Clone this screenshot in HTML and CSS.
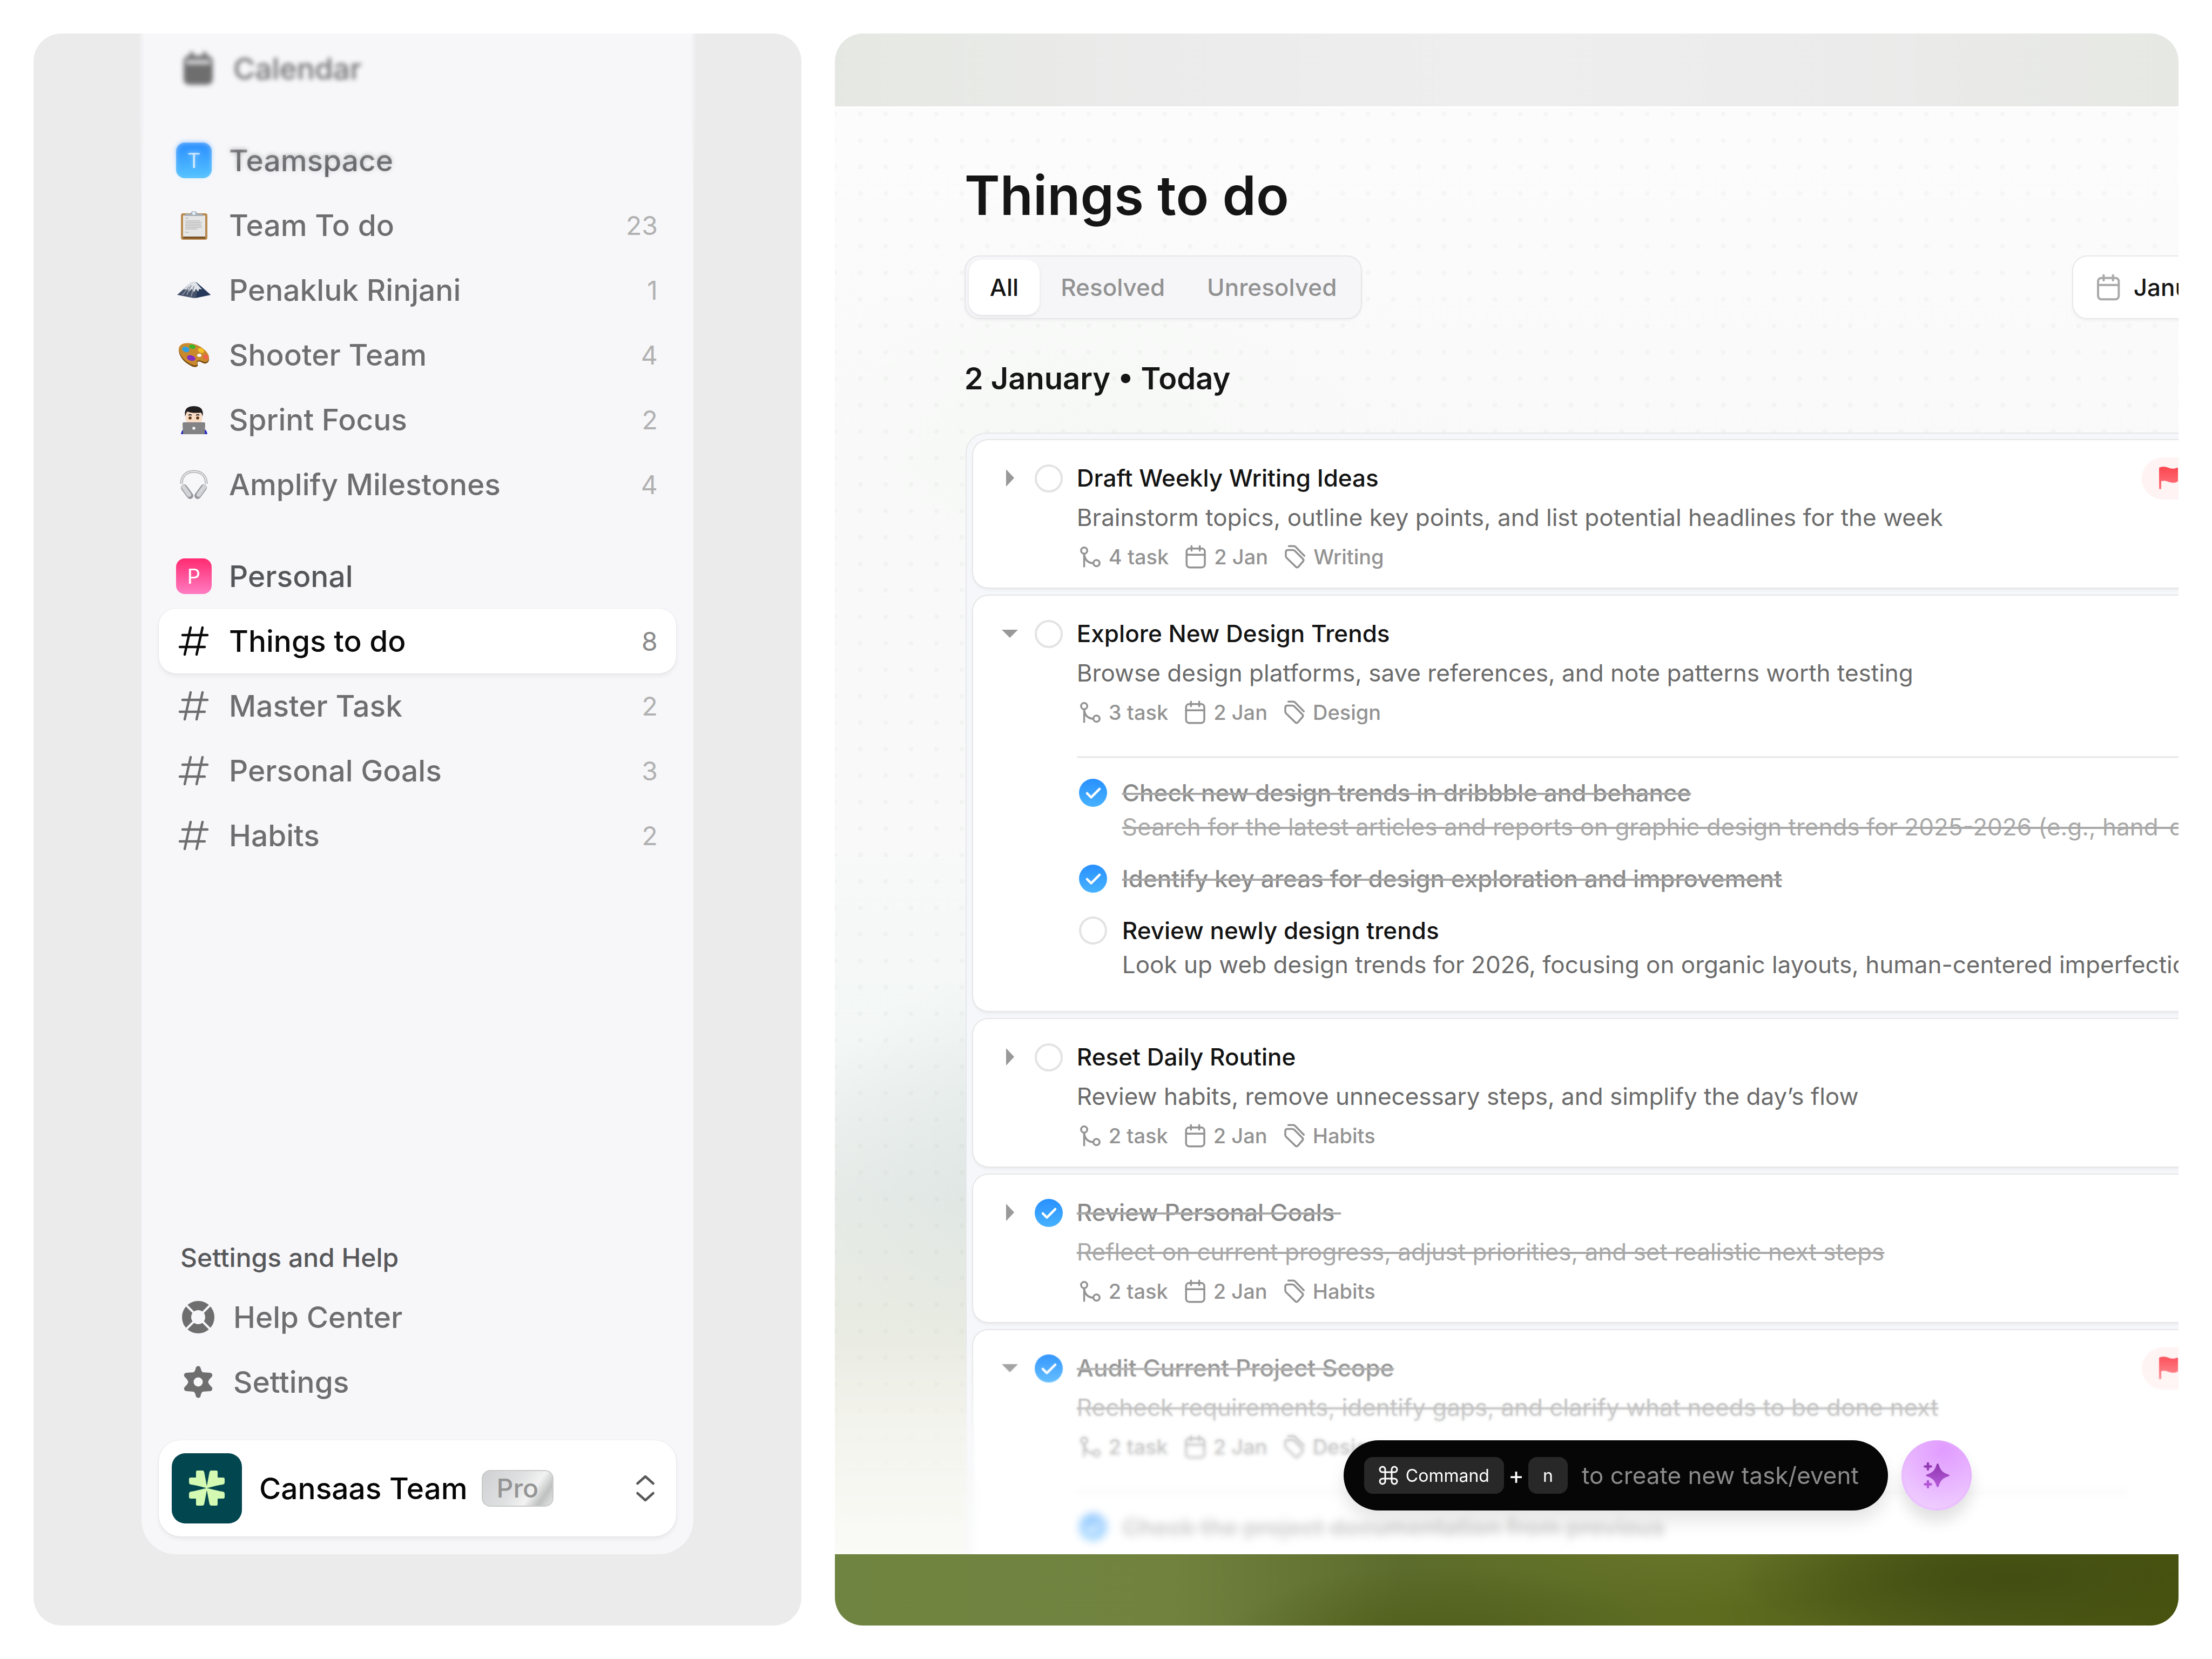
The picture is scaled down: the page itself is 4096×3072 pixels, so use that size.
FILE: index.html
```html
<!DOCTYPE html>
<html lang="en">
<head>
    <meta charset="UTF-8">
    <meta name="viewport" content="width=device-width, initial-scale=1.0">
    <title>Things to do</title>
    <link rel="stylesheet" href="styles.css">
</head>
<body>

<!-- shared icons -->
<svg class="sprite" aria-hidden="true">
    <symbol id="hash" viewBox="0 0 66 66">
        <path d="M27 8 16 58M49 8 38 58M12 22H58M7 44H53" fill="none" stroke="currentColor" stroke-width="4.5" stroke-linecap="round"/>
    </symbol>
    <symbol id="branch" viewBox="27 40 150 150">
        <g fill="none" stroke="currentColor" stroke-width="12" stroke-linecap="round">
            <circle cx="63" cy="76" r="19.5"/>
            <circle cx="141" cy="155" r="19.5"/>
            <path d="M63 98V176M63 98C66 132 84 152 118 156"/>
        </g>
    </symbol>
    <symbol id="calendar" viewBox="694 40 150 150">
        <g fill="none" stroke="currentColor" stroke-width="12" stroke-linecap="round">
            <rect x="712" y="63" width="115" height="119" rx="19"/>
            <path d="M712 102H827M743 48V77M795 48V77"/>
        </g>
    </symbol>
    <symbol id="tag" viewBox="1319 40 150 150">
        <g fill="none" stroke="currentColor" stroke-width="12" stroke-linecap="round" stroke-linejoin="round">
            <path d="M1336 85Q1336 72 1349 72H1379Q1387 72 1392 77L1444 129Q1451 136 1445 144L1416 178Q1408 187 1399 178L1341 122Q1336 117 1336 110Z"/>
            <path d="M1355 48H1387Q1393 48 1398 53L1453 109"/>
        </g>
    </symbol>
    <symbol id="caret-right" viewBox="0 0 40 40">
        <path d="M13 4 28 20 13 36Z" fill="currentColor"/>
    </symbol>
    <symbol id="caret-down" viewBox="0 0 40 40">
        <path d="M5 13H35L20 28Z" fill="currentColor"/>
    </symbol>
    <symbol id="flag" viewBox="0 0 36 44">
        <path d="M0 3Q0 2 1 1.500C9-1 14 1 20 3C25 4.500 29 4 33 2Q35 1.500 35 3.500V26Q35 27.500 34 28C29 31 22 30 17 28C12 26 8 26 4 27V40Q4 42 2 42Q0 42 0 40Z" fill="url(#flagFill)"/>
    </symbol>
    <defs>
        <linearGradient id="flagFill" x1="0" y1="0" x2="0" y2="1">
            <stop offset="0" stop-color="#fb4650"/>
            <stop offset="1" stop-color="#ff7680"/>
        </linearGradient>
        <linearGradient id="sparkFill" gradientUnits="userSpaceOnUse" x1="0" y1="0" x2="0" y2="48">
            <stop offset="0" stop-color="#8c34ac"/>
            <stop offset="1" stop-color="#ba5ddd"/>
        </linearGradient>
    </defs>
</svg>

<div class="page">

    <aside class="panel side-panel">
        <div class="sidebar">
            <nav class="nav" aria-label="Spaces">
                <div class="nav-group">
                    <a href="#" class="nav-row nav-row-tool">
                        <svg class="nav-icon" viewBox="0 0 66 66">
                            <rect x="6" y="9" width="54" height="54" rx="10" fill="#6f6e6f"/>
                            <rect x="11" y="17" width="44" height="8" fill="#f7f7fa" opacity=".8"/>
                            <path d="M21 5V14M45 5V14" stroke="#6f6e6f" stroke-width="7" stroke-linecap="round"/>
                        </svg>
                        <span>Calendar</span>
                    </a>
                </div>

                <div class="nav-group">
                    <a href="#" class="nav-row nav-row-head"><span class="space-badge badge-blue">T</span><span>Teamspace</span></a>
                    <a href="#" class="nav-row">
                        <svg class="nav-icon" viewBox="0 0 66 66">
                            <rect x="9" y="11" width="49" height="49" rx="4" fill="#b98a4e"/>
                            <rect x="13" y="54" width="41" height="4" fill="#7d5528"/>
                            <rect x="13" y="15" width="41" height="39" fill="#e6e6e6"/>
                            <path d="M17 20H23M17 25H44M17 28H48M17 31H46M17 34H48M17 37H47M17 40H39M17 46H24" stroke="#b9b9b9" stroke-width="1.5"/>
                            <path d="M16 16Q16 12 20 12H26Q28 7 33 7Q38 7 40 12H46Q50 12 50 16Z" fill="#a9b0b8"/>
                            <circle cx="33" cy="11" r="3" fill="#e4f0f8"/>
                        </svg>
                        <span>Team To do</span><span class="count">23</span>
                    </a>
                    <a href="#" class="nav-row">
                        <svg class="nav-icon" viewBox="0 0 66 66">
                            <path d="M2 42 28 19Q33 17 38 19L64 42 33 48Z" fill="#47536b"/>
                            <path d="M38 19 64 42 36 48 40 34Z" fill="#26395a"/>
                            <path d="M14 32 28 19Q33 17 37 19L48 32 43 31 41 36 37 31 33 37 29 31 23 37 22 32Z" fill="#dfe3e8"/>
                            <path d="M28 24 20 42M33 26 28 45M24 27 12 42" stroke="#8d94a2" stroke-width="2" fill="none"/>
                        </svg>
                        <span>Penakluk Rinjani</span><span class="count">1</span>
                    </a>
                    <a href="#" class="nav-row">
                        <svg class="nav-icon" viewBox="0 0 66 66">
                            <path d="M5 25C5 14 18 11 29 13C45 16 59 28 61 39C62 48 55 51 49 48C43 44 38 45 40 50C42 57 33 57 27 53C15 47 6 37 5 25Z" fill="#7a4c12"/>
                            <path d="M5 22C6 12 18 10 29 12C45 15 60 27 61 37C61 46 55 48 49 45C43 42 37 43 39 48C41 54 33 53 27 50C15 44 6 34 5 22Z" fill="#c98a2e"/>
                            <ellipse cx="18" cy="23" rx="7" ry="5" transform="rotate(20 18 23)" fill="#2f9fe0"/>
                            <ellipse cx="30" cy="18" rx="6" ry="4" transform="rotate(12 30 18)" fill="#3bb32b"/>
                            <ellipse cx="46" cy="25" rx="6" ry="4" transform="rotate(25 46 25)" fill="#f6c326"/>
                            <ellipse cx="55" cy="37" rx="5" ry="4" transform="rotate(45 55 37)" fill="#f0604c"/>
                            <ellipse cx="28" cy="39" rx="8" ry="5" transform="rotate(15 28 39)" fill="#8230c4"/>
                            <ellipse cx="43" cy="34" rx="4" ry="3" fill="#f7f7fa"/>
                        </svg>
                        <span>Shooter Team</span><span class="count">4</span>
                    </a>
                    <a href="#" class="nav-row">
                        <svg class="nav-icon" viewBox="0 0 66 66">
                            <path d="M9 60Q10 51 18 49H49Q57 51 58 60Z" fill="#2b2fc0"/>
                            <ellipse cx="33" cy="27" rx="16" ry="18" fill="#f8dcc6"/>
                            <path d="M17 27C14 13 22 8 33 8C44 8 52 13 49 27C48 23 47 21 46 20C38 21 28 21 21 18C19 20 18 23 17 27Z" fill="#221f20"/>
                            <path d="M23 25Q26 23 29 25M37 25Q40 23 43 25" stroke="#221f20" stroke-width="2" fill="none"/>
                            <circle cx="26" cy="30" r="2.800" fill="#5a3310"/>
                            <circle cx="40" cy="30" r="2.800" fill="#5a3310"/>
                            <path d="M12 41Q12 38 15 38H51Q54 38 54 41L53 60H13Z" fill="#838386"/>
                            <circle cx="33" cy="49" r="2.800" fill="#f4f4f4"/>
                        </svg>
                        <span>Sprint Focus</span><span class="count">2</span>
                    </a>
                    <a href="#" class="nav-row">
                        <svg class="nav-icon" viewBox="0 0 66 66">
                            <path d="M10 32C10 16 20 9 33 9C46 9 56 16 56 32" fill="none" stroke="#a4a5a9" stroke-width="5"/>
                            <path d="M10 32C10 16 20 9 33 9C46 9 56 16 56 32" fill="none" stroke="#e4e4e7" stroke-width="2.5"/>
                            <path d="M15 39 26 54M51 39 40 54" stroke="#96979c" stroke-width="12" stroke-linecap="round"/>
                            <path d="M14 38 24 52M52 38 42 52" stroke="#d3d4d8" stroke-width="8" stroke-linecap="round"/>
                        </svg>
                        <span>Amplify Milestones</span><span class="count">4</span>
                    </a>
                </div>

                <div class="nav-group">
                    <a href="#" class="nav-row nav-row-head"><span class="space-badge badge-pink">P</span><span>Personal</span></a>
                    <a href="#" class="nav-row active" aria-current="page"><svg class="nav-icon"><use href="#hash"/></svg><span>Things to do</span><span class="count">8</span></a>
                    <a href="#" class="nav-row"><svg class="nav-icon"><use href="#hash"/></svg><span>Master Task</span><span class="count">2</span></a>
                    <a href="#" class="nav-row"><svg class="nav-icon"><use href="#hash"/></svg><span>Personal Goals</span><span class="count">3</span></a>
                    <a href="#" class="nav-row"><svg class="nav-icon"><use href="#hash"/></svg><span>Habits</span><span class="count">2</span></a>
                </div>
            </nav>

            <nav class="nav-help" aria-label="Settings and Help">
                <h2 class="nav-title">Settings and Help</h2>
                <a href="#" class="nav-row nav-row-tool">
                    <svg class="nav-icon" viewBox="0 0 66 66">
                        <circle cx="33" cy="33" r="21.5" fill="none" stroke="#6f6e6f" stroke-width="17"/>
                        <path d="M10 10 56 56M56 10 10 56" stroke="#f7f7fa" stroke-width="4"/>
                    </svg>
                    <span>Help Center</span>
                </a>
                <a href="#" class="nav-row nav-row-tool">
                    <svg class="nav-icon" viewBox="0 0 66 66">
                        <path d="M33 8Q35 18 41 19.500 46 20 54.700 20.500 47 28 47 33 47 38 54.700 45.500 46 46 41 46.500 35 48 33 58 31 48 25 46.500 20 46 11.300 45.500 19 38 19 33 19 28 11.300 20.500 20 20 25 19.500 31 18 33 8Z" fill="#6f6e6f" stroke="#6f6e6f" stroke-width="9" stroke-linejoin="round"/>
                        <circle cx="33" cy="33" r="8.500" fill="#f7f7fa"/>
                    </svg>
                    <span>Settings</span>
                </a>
            </nav>

            <button type="button" class="team-switch">
                <svg class="team-logo" viewBox="0 0 130 130">
                    <rect width="130" height="130" rx="25" fill="#02464f"/>
                    <g fill="#d4f9b2" stroke="#d4f9b2" stroke-width="2" stroke-linejoin="round">
                        <path id="petal" d="M47 33H57Q59 33 59.500 37L64.500 63.500Q44 58 36 57Q33 56.500 33 54V48Q33 46 35 46H44Q46 46 46 44V34Z"/>
                        <use href="#petal" transform="matrix(-1 0 0 1 130 0)"/>
                        <use href="#petal" transform="matrix(1 0 0 -1 0 129)"/>
                        <use href="#petal" transform="matrix(-1 0 0 -1 130 129)"/>
                    </g>
                </svg>
                <span class="team-name">Cansaas Team</span>
                <span class="plan">Pro</span>
                <svg class="team-arrows" viewBox="0 0 34 50">
                    <path d="M2.500 16 17 3 31.500 16M2.500 34 17 47 31.500 34" fill="none" stroke="#58585a" stroke-width="4.500" stroke-linecap="round" stroke-linejoin="round"/>
                </svg>
            </button>
            <div class="top-blur"></div>
        </div>
    </aside>

    <main class="panel main-panel">
        <div class="window">
            <h1 class="title">Things to do</h1>

            <div class="toolbar">
                <div class="tabs">
                    <button type="button" class="tab active">All</button>
                    <button type="button" class="tab">Resolved</button>
                    <button type="button" class="tab">Unresolved</button>
                </div>
                <button type="button" class="date-button"><svg class="date-icon"><use href="#calendar"/></svg>January 2026</button>
            </div>

            <h2 class="day">2 January • Today</h2>

            <div class="task-list">
                <article class="task">
                    <button type="button" class="caret" aria-label="Expand"><svg><use href="#caret-right"/></svg></button>
                    <input type="checkbox" class="check" id="task1">
                    <div class="task-body">
                        <label class="task-name" for="task1">Draft Weekly Writing Ideas</label>
                        <p class="task-text">Brainstorm topics, outline key points, and list potential headlines for the week</p>
                        <div class="meta">
                            <span class="meta-item"><svg><use href="#branch"/></svg>4 task</span>
                            <span class="meta-item"><svg><use href="#calendar"/></svg>2 Jan</span>
                            <span class="meta-item"><svg><use href="#tag"/></svg>Writing</span>
                        </div>
                    </div>
                    <span class="priority"><svg><use href="#flag"/></svg>Urgent</span>
                </article>

                <article class="task">
                    <button type="button" class="caret" aria-label="Collapse"><svg><use href="#caret-down"/></svg></button>
                    <input type="checkbox" class="check" id="task2">
                    <div class="task-body">
                        <label class="task-name" for="task2">Explore New Design Trends</label>
                        <p class="task-text">Browse design platforms, save references, and note patterns worth testing</p>
                        <div class="meta">
                            <span class="meta-item"><svg><use href="#branch"/></svg>3 task</span>
                            <span class="meta-item"><svg><use href="#calendar"/></svg>2 Jan</span>
                            <span class="meta-item"><svg><use href="#tag"/></svg>Design</span>
                        </div>
                        <ul class="subtasks">
                            <li class="subtask done">
                                <input type="checkbox" class="check" id="sub1" checked>
                                <div>
                                    <label class="task-name" for="sub1">Check new design trends in dribbble and behance</label>
                                    <p class="task-text">Search for the latest articles and reports on graphic design trends for 2025-2026 (e.g., hand-drawn)</p>
                                </div>
                            </li>
                            <li class="subtask done">
                                <input type="checkbox" class="check" id="sub2" checked>
                                <div>
                                    <label class="task-name" for="sub2">Identify key areas for design exploration and improvement</label>
                                </div>
                            </li>
                            <li class="subtask">
                                <input type="checkbox" class="check" id="sub3">
                                <div>
                                    <label class="task-name" for="sub3">Review newly design trends</label>
                                    <p class="task-text">Look up web design trends for 2026, focusing on organic layouts, human-centered imperfections</p>
                                </div>
                            </li>
                        </ul>
                    </div>
                </article>

                <article class="task">
                    <button type="button" class="caret" aria-label="Expand"><svg><use href="#caret-right"/></svg></button>
                    <input type="checkbox" class="check" id="task3">
                    <div class="task-body">
                        <label class="task-name" for="task3">Reset Daily Routine</label>
                        <p class="task-text">Review habits, remove unnecessary steps, and simplify the day’s flow</p>
                        <div class="meta">
                            <span class="meta-item"><svg><use href="#branch"/></svg>2 task</span>
                            <span class="meta-item"><svg><use href="#calendar"/></svg>2 Jan</span>
                            <span class="meta-item"><svg><use href="#tag"/></svg>Habits</span>
                        </div>
                    </div>
                </article>

                <article class="task done">
                    <button type="button" class="caret" aria-label="Expand"><svg><use href="#caret-right"/></svg></button>
                    <input type="checkbox" class="check" id="task4" checked>
                    <div class="task-body">
                        <label class="task-name" for="task4">Review Personal Goals&nbsp;</label>
                        <p class="task-text">Reflect on current progress, adjust priorities, and set realistic next steps</p>
                        <div class="meta">
                            <span class="meta-item"><svg><use href="#branch"/></svg>2 task</span>
                            <span class="meta-item"><svg><use href="#calendar"/></svg>2 Jan</span>
                            <span class="meta-item"><svg><use href="#tag"/></svg>Habits</span>
                        </div>
                    </div>
                </article>

                <article class="task done">
                    <button type="button" class="caret" aria-label="Collapse"><svg><use href="#caret-down"/></svg></button>
                    <input type="checkbox" class="check" id="task5" checked>
                    <div class="task-body">
                        <label class="task-name" for="task5">Audit Current Project Scope</label>
                        <p class="task-text">Recheck requirements, identify gaps, and clarify what needs to be done next</p>
                        <div class="meta">
                            <span class="meta-item"><svg><use href="#branch"/></svg>2 task</span>
                            <span class="meta-item"><svg><use href="#calendar"/></svg>2 Jan</span>
                            <span class="meta-item"><svg><use href="#tag"/></svg>Design</span>
                        </div>
                        <ul class="subtasks">
                            <li class="subtask done">
                                <input type="checkbox" class="check" id="sub4" checked>
                                <div>
                                    <label class="task-name" for="sub4">Check the project documentation from previous</label>
                                </div>
                            </li>
                        </ul>
                    </div>
                    <span class="priority"><svg><use href="#flag"/></svg>Urgent</span>
                </article>
            </div>

            <div class="fade"></div>
            <div class="blur blur-1"></div>
            <div class="blur blur-2"></div>
            <div class="blur blur-3"></div>

            <div class="quick-bar">
                <div class="shortcut">
                    <kbd class="key">
                        <svg viewBox="0 0 36 36"><path d="M12 12H24V24H12ZM12 12H7.500A5 5 0 1 1 12 7.500ZM24 12V7.500A5 5 0 1 1 28.500 12ZM24 24H28.500A5 5 0 1 1 24 28.500ZM12 24V28.500A5 5 0 1 1 7.500 24Z" fill="none" stroke="#fff" stroke-width="3"/></svg>
                        Command
                    </kbd>
                    <span class="plus">+</span>
                    <kbd class="key">n</kbd>
                    <span class="shortcut-text">to create new task/event</span>
                </div>
                <button type="button" class="ai-button" aria-label="Assistant">
                    <svg viewBox="0 0 48 48">
                        <path d="M26 2Q27.500 2 28 4C31 14 35 19 45 22Q48 23 48 24Q48 25 45 26C35 29 31 34 28 44Q27.500 46 26 46Q24.500 46 24 44C21 34 17 29 7 26Q4 25 4 24Q4 23 7 22C17 19 21 14 24 4Q24.500 2 26 2Z" fill="url(#sparkFill)"/>
                        <path d="M8 2V13M2.500 7.500H13.500M8 35V46M2.500 40.500H13.500" stroke="url(#sparkFill)" stroke-width="4.500" stroke-linecap="round"/>
                    </svg>
                </button>
            </div>
        </div>
    </main>

</div>

</body>
</html>
```
FILE: styles.css
```css
* {
    box-sizing: border-box;
}

body {
    margin: 0;
    background-color: #fff;
    font-family: Inter, "Liberation Sans", sans-serif;
    color: #131313;
}

h1, h2, p, ul {
    margin: 0;
    padding: 0;
}

button {
    border: none;
    background: none;
    padding: 0;
    font: inherit;
    color: inherit;
    cursor: pointer;
}

.sprite {
    position: absolute;
    width: 0;
    height: 0;
}

.page {
    display: grid;
    grid-template-columns: 4fr 7fr;
    gap: 62px;
    height: 100vh;
    padding: 62px;
}

.panel {
    border-radius: 52px;
    overflow: hidden;
    min-width: 0;
}

/* sidebar */

.side-panel {
    display: flex;
    background-color: #ebebeb;
    padding: 0 200px 132px;
}

.sidebar {
    position: relative;
    flex: 1;
    display: flex;
    flex-direction: column;
    padding: 5px 32px 33px;
    background-color: #f7f7fa;
    border-radius: 0 0 64px 64px;
}

.nav {
    flex: 1;
    display: flex;
    flex-direction: column;
    gap: 50px;
}

.nav-row {
    display: flex;
    align-items: center;
    gap: 32px;
    height: 120px;
    padding: 0 34px 0 32px;
    border-radius: 32px;
    color: #6f6e6f;
    font-size: 55px;
    font-weight: 500;
    text-decoration: none;
    white-space: nowrap;
}

.nav-row-head {
    color: #55565a;
}

.nav-row-tool {
    padding-left: 40px;
}

.nav-row.active {
    background-color: #fff;
    color: #0a0a0a;
    box-shadow: 0 0 3px rgba(0, 0, 0, 0.08), 0 5px 8px rgba(0, 0, 0, 0.06);
}

.nav-icon {
    flex: none;
    width: 66px;
    height: 66px;
}

.count {
    margin-left: auto;
    font-size: 48px;
    font-weight: 400;
    color: #b1b1b1;
}

.nav-row.active .count {
    color: #8a8a8a;
}

.space-badge {
    flex: none;
    display: flex;
    align-items: center;
    justify-content: center;
    width: 66px;
    height: 66px;
    border-radius: 16px;
    color: #fff;
    font-size: 38px;
    font-weight: 400;
}

.badge-blue {
    background: linear-gradient(#2b8eff, #55c3ff);
}

.badge-pink {
    background: linear-gradient(#ff2a70, #ff7cc2);
}

.nav-title {
    padding: 0 40px;
    margin-bottom: 20px;
    font-size: 48px;
    line-height: 60px;
    font-weight: 500;
    color: #58585a;
}

.team-switch {
    display: flex;
    align-items: center;
    margin-top: 48px;
    padding: 24px 40px 24px 24px;
    border-radius: 40px;
    background-color: #fff;
    box-shadow: 0 0 3px rgba(0, 0, 0, 0.08), 0 5px 8px rgba(0, 0, 0, 0.06);
    white-space: nowrap;
}

.team-logo {
    width: 130px;
    height: 130px;
}

.team-name {
    margin: 0 26px 0 32px;
    font-size: 55px;
    font-weight: 500;
    color: #050505;
}

.plan {
    padding: 0 26px;
    border: 2px solid #c9cbca;
    border-radius: 16px;
    background: linear-gradient(125deg, #cfd0d2 0%, #dfe0e1 45%, #f1f2f1 68%, #bfc1c0 84%, #e6e7e6 100%);
    font-size: 48px;
    line-height: 64px;
    font-weight: 500;
    color: #949494;
}

.team-arrows {
    width: 34px;
    height: 50px;
    margin-left: auto;
}

.top-blur {
    position: absolute;
    top: 0;
    left: -20px;
    right: -20px;
    height: 290px;
    backdrop-filter: blur(4px);
    -webkit-mask-image: linear-gradient(#000 50%, transparent);
    mask-image: linear-gradient(#000 50%, transparent);
    pointer-events: none;
}

/* main panel */

.main-panel {
    display: flex;
    flex-direction: column;
    padding: 135px 0 132px;
    background:
        linear-gradient(90deg, #e5e8e2, #ebebeb 24%, #eeeeee 50%, #ebebeb 75%, #e6e8e3) top / 100% 50% no-repeat,
        radial-gradient(500px 120px at 87% 97%, #424e12, transparent),
        radial-gradient(400px 140px at 45% 101%, #505e1a, transparent),
        radial-gradient(500px 120px at 62% 95%, #66752a, transparent),
        linear-gradient(90deg, #6f8440, #71823f 25%, #5c6c2c 42%, #5d6c1f 65%, #4e5a18 85%, #49530f);
}

.window {
    position: relative;
    flex: 1;
    min-height: 0;
    margin-right: -300px;
    padding: 100px 48px 0 240px;
    border-top: 3px solid #fff;
    overflow: hidden;
    background:
        radial-gradient(circle at 4px 4px, rgba(60, 70, 60, 0.03) 4px, transparent 5px) -4px 7px / 47px 49px,
        radial-gradient(700px 420px at 16% 22%, rgba(244, 248, 244, 0.6), transparent),
        radial-gradient(380px 360px at 12% 73%, rgba(214, 224, 221, 0.5), transparent),
        linear-gradient(#fcfcfc, #f9f9f9 25%, #f8f9f8 50%, #f3f7f6 64%, #e6ebe8 75%, #e8ebe2 83%, #eeeee5 91%, #f3f3ea);
}

.title {
    font-size: 100px;
    line-height: 124px;
    font-weight: 600;
    color: #151515;
}

.toolbar {
    display: flex;
    justify-content: space-between;
    margin-top: 49px;
}

.tabs {
    display: flex;
    padding: 6px;
    border: 2px solid #e6e6e8;
    border-radius: 28px;
    background-color: #f6f6f9;
    box-shadow: 0 3px 5px rgba(0, 0, 0, 0.04);
}

.tab {
    height: 102px;
    padding: 0 39px;
    border-radius: 24px;
    font-size: 44px;
    font-weight: 500;
    color: #929292;
}

.tab.active {
    background-color: #fff;
    color: #151515;
    box-shadow: 0 3px 6px rgba(0, 0, 0, 0.08);
}

.date-button {
    display: flex;
    align-items: center;
    gap: 22px;
    padding: 0 40px;
    border: 2px solid #e8e8e8;
    border-radius: 28px;
    background-color: #fff;
    box-shadow: 0 3px 5px rgba(0, 0, 0, 0.04);
    font-size: 44px;
    font-weight: 500;
    color: #151515;
}

.date-icon {
    width: 50px;
    height: 50px;
    color: #a9a9a9;
}

.day {
    margin: 76px 0 66px;
    font-size: 56px;
    line-height: 68px;
    font-weight: 600;
    color: #151515;
}

.task-list {
    display: flex;
    flex-direction: column;
    gap: 15px;
    margin-left: 2px;
    padding: 12px;
    border: 2px solid #e6e7e7;
    border-radius: 38px;
    background-color: #f6f7fa;
}

.task {
    display: grid;
    grid-template-columns: 40px 52px minmax(0, 1fr) auto;
    column-gap: 26px;
    padding: 40px 70px 27px 48px;
    border-radius: 28px;
    background-color: #fff;
    box-shadow: 0 0 0 2px #e6e6e8, 0 4px 6px rgba(0, 0, 0, 0.06);
}

.caret {
    height: 60px;
    color: #999;
}

.caret svg {
    display: block;
    width: 40px;
    height: 40px;
}

.check {
    appearance: none;
    flex: none;
    width: 52px;
    height: 52px;
    margin: 5px 0;
    border: 4px solid #e3e3e3;
    border-radius: 50%;
    background-color: #fff;
}

.check:checked {
    border: none;
    background: url("data:image/svg+xml,%3Csvg xmlns='http://www.w3.org/2000/svg' viewBox='0 0 52 52'%3E%3Cpath d='M15 27l7.500 7.500L38 19' fill='none' stroke='white' stroke-width='4.500' stroke-linecap='round' stroke-linejoin='round'/%3E%3C/svg%3E") center / 100% no-repeat, linear-gradient(#2890ff, #47b2ff);
}

.task-body {
    display: flex;
    flex-direction: column;
    gap: 13px;
}

.task-name,
.task-text {
    font-size: 44px;
    line-height: 60px;
    white-space: nowrap;
}

.task-name {
    align-self: flex-start;
    font-weight: 500;
    color: #131313;
}

.task-text {
    width: max-content;
    color: #6b6b6b;
}

.done .task-name,
.done .task-text {
    text-decoration: line-through;
    text-decoration-thickness: 4px;
    text-decoration-color: #a9a9a9;
}

.done .task-name {
    color: #8a8a8a;
}

.done .task-text {
    color: #a9a9a9;
}

.meta {
    display: flex;
    gap: 28px;
    padding-left: 3px;
}

.meta-item {
    display: flex;
    align-items: center;
    gap: 12px;
    font-size: 38px;
    line-height: 60px;
    font-weight: 500;
    color: #939393;
}

.meta-item svg {
    width: 44px;
    height: 44px;
}

.priority {
    display: flex;
    align-items: center;
    gap: 12px;
    height: 78px;
    margin-top: -8px;
    padding: 0 32px;
    border-radius: 40px;
    background-color: #fff3f3;
    font-size: 38px;
    font-weight: 500;
    color: #fb4650;
}

.priority svg {
    width: 36px;
    height: 44px;
}

.subtasks {
    display: flex;
    flex-direction: column;
    gap: 33px;
    margin-top: 38px;
    padding: 33px 0 27px 4px;
    border-top: 4px solid #ececec;
    list-style: none;
}

.subtask {
    display: flex;
    gap: 28px;
}

.subtask .task-name,
.subtask .task-text {
    line-height: 63px;
}

.subtask .task-name {
    display: block;
    width: max-content;
}

.fade {
    position: absolute;
    left: 0;
    right: 0;
    bottom: 0;
    height: 400px;
    background: linear-gradient(rgba(255, 255, 255, 0), rgba(255, 255, 255, 0.4) 50%, rgba(255, 255, 255, 0.5) 80%, rgba(255, 255, 255, 0.6));
    pointer-events: none;
}

.blur {
    position: absolute;
    left: 0;
    right: 0;
    bottom: 0;
    pointer-events: none;
}

.blur-1 {
    height: 400px;
    backdrop-filter: blur(1px);
    -webkit-mask-image: linear-gradient(transparent, #000 30%);
    mask-image: linear-gradient(transparent, #000 30%);
}

.blur-2 {
    height: 300px;
    backdrop-filter: blur(3px);
    -webkit-mask-image: linear-gradient(transparent, #000 40%);
    mask-image: linear-gradient(transparent, #000 40%);
}

.blur-3 {
    height: 160px;
    backdrop-filter: blur(7px);
    -webkit-mask-image: linear-gradient(transparent, #000 40%);
    mask-image: linear-gradient(transparent, #000 40%);
}

/* floating shortcut bar */

.quick-bar {
    position: absolute;
    left: 942px;
    bottom: 81px;
    display: flex;
    gap: 25px;
}

.shortcut {
    display: flex;
    align-items: center;
    height: 130px;
    padding: 0 54px 0 38px;
    border-radius: 65px;
    background-color: #060606;
    box-shadow: 0 20px 32px rgba(0, 0, 0, 0.1);
    white-space: nowrap;
}

.key {
    display: flex;
    align-items: center;
    gap: 14px;
    height: 68px;
    padding: 0 27px;
    border-radius: 16px;
    background-color: #282828;
    font-family: inherit;
    font-size: 32px;
    color: #fff;
}

.key svg {
    width: 36px;
    height: 36px;
}

.plus {
    padding: 0 8px;
    font-size: 44px;
    color: #fff;
}

.shortcut-text {
    margin-left: 26px;
    font-size: 44px;
    color: #8b8b8b;
}

.ai-button {
    display: flex;
    align-items: center;
    justify-content: center;
    width: 130px;
    height: 130px;
    border-radius: 50%;
    background: radial-gradient(circle at 60% 12%, #e09bff, #e8b4ff 45%, #f2d9ff 100%);
    box-shadow: inset 0 0 6px #e3aaff, 0 20px 28px rgba(0, 0, 0, 0.12);
}

.ai-button svg {
    width: 48px;
    height: 48px;
}
```
